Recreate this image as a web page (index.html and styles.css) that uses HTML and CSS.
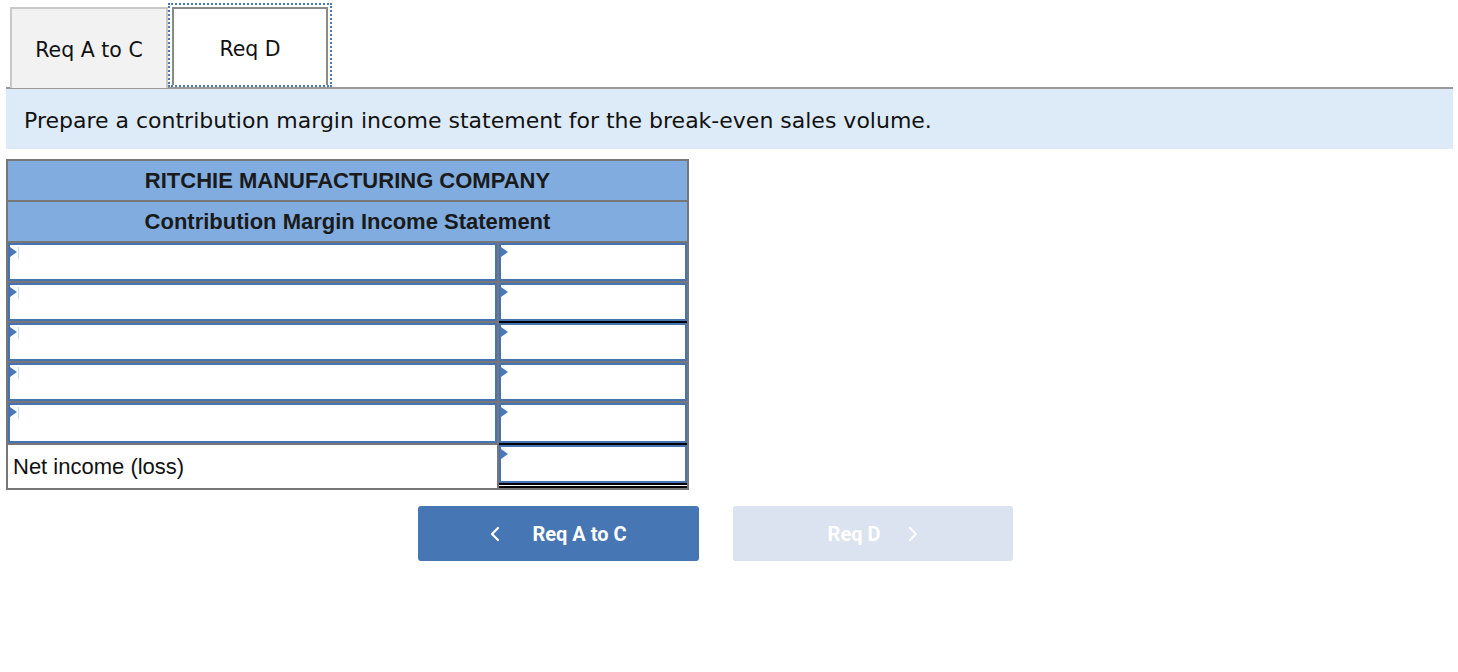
FILE: index.html
```html
<!DOCTYPE html>
<html>
<head>
<meta charset="utf-8">
<link rel="stylesheet" href="styles.css">
</head>
<body>
<div class="page">
  <div class="tabs">
    <div class="tab">Req A to C</div>
    <div class="tab active"><span>Req D</span></div>
  </div>
  <div class="prompt">Prepare a contribution margin income statement for the break-even sales volume.</div>
  <table class="stmt">
    <tr><th colspan="2">RITCHIE MANUFACTURING COMPANY</th></tr>
    <tr><th colspan="2">Contribution Margin Income Statement</th></tr>
    <tr><td class="lab"><div class="inp left"></div></td><td class="amt"><div class="inp"></div></td></tr>
    <tr><td class="lab"><div class="inp left"></div></td><td class="amt under"><div class="inp"></div></td></tr>
    <tr><td class="lab"><div class="inp left"></div></td><td class="amt"><div class="inp"></div></td></tr>
    <tr><td class="lab"><div class="inp left"></div></td><td class="amt"><div class="inp"></div></td></tr>
    <tr class="last"><td class="lab"><div class="inp left"></div></td><td class="amt under"><div class="inp"></div></td></tr>
    <tr class="total"><td class="lab text">Net income (loss)</td><td class="amt dbl"><div class="inp"></div></td></tr>
  </table>
  <div class="nav">
    <button class="btn prev"><svg class="chev" viewBox="0 0 10 16" width="10" height="16"><path d="M8 2 L2 8 L8 14" fill="none" stroke="#fff" stroke-width="2.2" stroke-linecap="round" stroke-linejoin="round"/></svg><span>Req A to C</span></button>
    <button class="btn next"><span>Req D</span><svg class="chev" viewBox="0 0 10 16" width="10" height="16"><path d="M2 2 L8 8 L2 14" fill="none" stroke="#fff" stroke-width="2.2" stroke-linecap="round" stroke-linejoin="round"/></svg></button>
  </div>
</div>
</body>
</html>
```
FILE: styles.css
```css
html, body {
  margin: 0;
  padding: 0;
  background: #fff;
}
.page {
  padding: 7px 5px 0 6px;
  font-family: "DejaVu Sans", Verdana, sans-serif;
  color: #111;
}
.tabs {
  display: flex;
  padding-left: 4px;
  height: 80px;
  border-bottom: 2px solid #999;
}
.tab {
  box-sizing: border-box;
  width: 158px;
  height: 81px;
  background: #f2f2f2;
  border: 2px solid #c8c8c8;
  border-bottom: none;
  display: flex;
  align-items: center;
  justify-content: center;
  font-size: 20.5px;
  color: #111;
  padding-top: 2px;
}
.tab.active {
  width: 164px;
  height: 84px;
  margin-top: -4px;
  background: #fff;
  border: 2px dotted #4a78b8;
  padding: 2px 2px 0 2px;
}
.tab.active span {
  box-sizing: border-box;
  width: 100%;
  height: 100%;
  border: 2px solid #8a8a8a;
  border-bottom: none;
  display: flex;
  align-items: center;
  justify-content: center;
  padding-top: 4px;
}
.prompt {
  background: #ddebf8;
  height: 60px;
  padding-left: 18px;
  display: flex;
  align-items: center;
  font-size: 22px;
  color: #111;
  margin-bottom: 10px;
  padding-top: 2px;
  box-sizing: border-box;
}
.stmt {
  border-collapse: collapse;
  width: 683px;
  font-family: "Liberation Sans", Arial, sans-serif;
  border: 2px solid #777;
}
.stmt th {
  background: #80acdf;
  border: 2px solid #777;
  height: 39px;
  padding: 0;
  font-size: 22px;
  font-weight: bold;
  color: #1a1a1a;
  text-align: center;
}
.stmt td {
  border: 2px solid #777;
  padding: 0;
  height: 38px;
}
.stmt td.lab { width: 487px; }
.stmt td.amt { width: 190px; }
.inp {
  box-sizing: border-box;
  height: 38px;
  border: 2px solid #4673b3;
  position: relative;
  background: #fff;
}
.stmt tr.last .inp { height: 40px; }
.inp::before {
  content: "";
  position: absolute;
  left: 0;
  top: 2px;
  border-left: 7px solid #4a78b8;
  border-top: 5px solid transparent;
  border-bottom: 5px solid transparent;
}
.inp.left::after {
  content: "";
  position: absolute;
  left: 8px;
  top: 2px;
  width: 1px;
  height: 12px;
  background: #c9dcf0;
}
.stmt td.under .inp {
  box-shadow: 0 2px 0 #000;
}
.stmt tr.total td {
  height: 43px;
}
.stmt td.text {
  font-size: 22px;
  padding-left: 5px;
  color: #111;
}
.stmt td.dbl .inp {
  height: 38px;
  margin-bottom: 5px;
  box-shadow: 0 2px 0 #000, 0 3px 0 #fff, 0 5px 0 #000;
}
.nav {
  display: flex;
  gap: 34px;
  padding-left: 412px;
  margin-top: 16px;
}
.btn {
  width: 281px;
  height: 55px;
  border: none;
  border-radius: 3px;
  display: flex;
  align-items: center;
  justify-content: center;
  gap: 32px;
  font-family: Roboto, "Liberation Sans", sans-serif;
  font-weight: bold;
  font-size: 20px;
  color: #fff;
  padding: 0;
}
.btn.prev {
  background: #4676b4;
  padding-left: 0;
}
.btn.next {
  background: #dae3ef;
  width: 280px;
  padding-right: 0;
  gap: 28px;
}
.chev { display: block; }
```
